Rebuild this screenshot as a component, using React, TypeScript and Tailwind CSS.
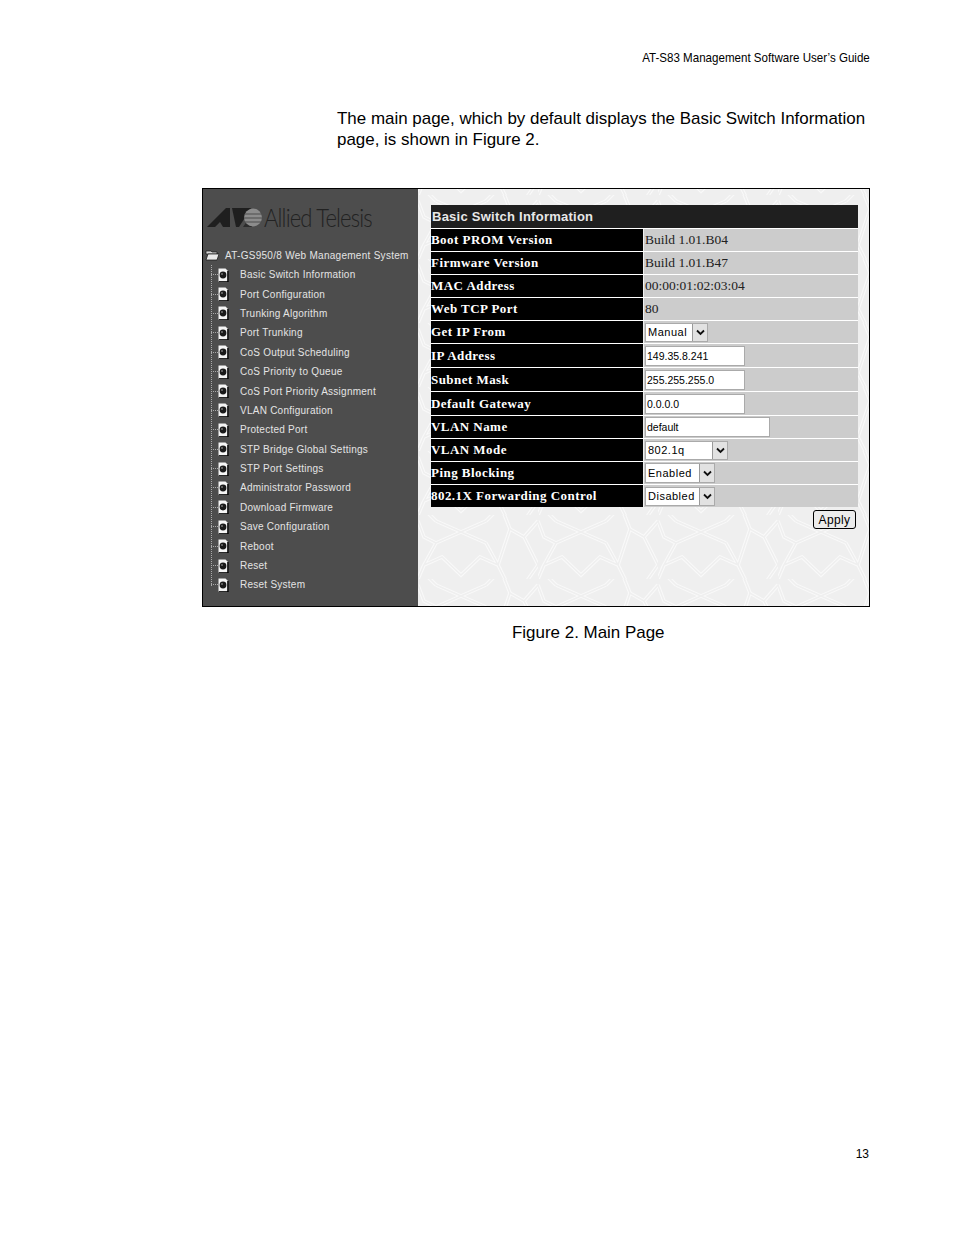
const menu = [
  "Basic Switch Information",
  "Port Configuration",
  "Trunking Algorithm",
  "Port Trunking",
  "CoS Output Scheduling",
  "CoS Priority to Queue",
  "CoS Port Priority Assignment",
  "VLAN Configuration",
  "Protected Port",
  "STP Bridge Global Settings",
  "STP Port Settings",
  "Administrator Password",
  "Download Firmware",
  "Save Configuration",
  "Reboot",
  "Reset",
  "Reset System",
];

// background tile of the content frame, drawn twice to get the double line
const tile =
  "M18 6 L68 28 M68 6 L18 28 M18 28 L6 50 L24 42 L43 60 L62 42 L80 50 L68 28 M18 6 L6 -6 M68 6 L80 -6 M80 50 L92 14 L106 22 L120 6 M92 14 L84 -6 M0 6 L6 22 L18 28 M106 22 L120 50 M120 50 L106 70 M6 50 L0 64 M80 50 L90 70";

function LogoMark() {
  return (
    <svg width="55" height="19" viewBox="0 0 55 19" className="shrink-0">
      <path d="M0 19 L19 0 H23 V19 H16 L13 14 L8 19 Z" fill="#1f1f1f" />
      <path d="M25 0 H44 L32 19 H29 Z" fill="#1f1f1f" />
      <path d="M36 19 L45 6 V19 Z" fill="#2c2c2c" />
      <circle cx="46" cy="9.5" r="9" fill="#8c8c8c" />
      <path d="M38 6 H55 M37 10 H55 M38 14 H55" stroke="#4d4d4d" strokeWidth="1" />
    </svg>
  );
}

function FolderIcon() {
  return (
    <svg width="14" height="12" viewBox="0 0 14 12" className="shrink-0">
      <path d="M1 2 H6 L7 3 H12 V5 H1 Z" fill="#d8d8d8" stroke="#111" strokeWidth="0.7" />
      <path d="M1 11 L3 5 H14 L12 11 Z" fill="#e8e8e8" stroke="#111" strokeWidth="0.7" />
    </svg>
  );
}

function DocIcon() {
  return (
    <svg width="11" height="14" viewBox="0 0 11 14" className="shrink-0">
      <path d="M0.5 0.5 H7.5 L10.5 3.5 V13.5 H0.5 Z" fill="#f4f4f4" />
      <path d="M10 3 V14 H1" fill="none" stroke="#000" strokeWidth="1.6" />
      <circle cx="5" cy="7" r="3.4" fill="#1a1a1a" />
      <circle cx="4" cy="6" r="1" fill="#777" />
    </svg>
  );
}

function Arrow() {
  return (
    <span className="flex h-full w-[15px] shrink-0 items-center justify-center border-l border-[#999] bg-[#e2e2e2]">
      <svg width="9" height="7" viewBox="0 0 9 7">
        <path d="M1 1.5 L4.5 5 L8 1.5" fill="none" stroke="#111" strokeWidth="1.8" />
      </svg>
    </span>
  );
}

function Select({ value, width }: { value: string; width: string }) {
  return (
    <div className={`flex items-center border border-[#aaa] bg-white ${width}`}>
      <span className="flex-1 pl-[2px] text-[11px] tracking-[0.5px] text-black [font-family:'Liberation_Sans',sans-serif]">
        {value}
      </span>
      <Arrow />
    </div>
  );
}

function Field({ value, width }: { value: string; width: string }) {
  return (
    <input
      readOnly
      value={value}
      className={`border border-[#aaa] bg-white pl-[1px] text-[10.5px] text-black outline-none [font-family:'Liberation_Sans',sans-serif] ${width}`}
    />
  );
}

function Row({ label, height, children }: { label: string; height: string; children: React.ReactNode }) {
  return (
    <div className={`flex border-t border-white ${height}`}>
      <div className="flex w-[212px] shrink-0 items-center bg-black text-[13px] font-bold tracking-[0.45px] text-white [font-family:'Liberation_Serif',serif]">
        {label}
      </div>
      <div className="ml-[1px] flex flex-1 items-center bg-[#cccccc] pl-[1px] text-[13.5px] text-[#222] [font-family:'Liberation_Serif',serif]">
        {children}
      </div>
    </div>
  );
}

export default function App() {
  return (
    <div className="flex h-[1235px] w-[954px] flex-col bg-white text-black [font-family:'Liberation_Sans',sans-serif]">
      <div className="pr-[84px] pt-[49px] text-right text-[13px] leading-[17px]">
        <span className="inline-block origin-right scale-x-[0.89] whitespace-nowrap">AT-S83 Management Software User’s Guide</span>
      </div>

      <p className="ml-[337px] mt-[42px] w-[540px] text-[16.95px] leading-[21px]">
        The main page, which by default displays the Basic Switch Information page, is shown in Figure 2.
      </p>

      <div className="ml-[202px] mt-[38px] flex h-[419px] w-[668px] border border-black">
        <aside className="flex w-[215px] shrink-0 flex-col bg-[#4d4d4d] pt-[15px]">
          <div className="flex h-[27px] items-center pl-[4px]">
            <LogoMark />
            <span className="ml-[2px] inline-block origin-left scale-x-[0.85] whitespace-nowrap text-[26px] font-light tracking-[-1px] text-[#222] [font-family:Lato,sans-serif]">Allied Telesis</span>
          </div>
          <div className="mt-[14px] flex h-[20px] items-center pl-[2px] text-[10px] tracking-[0.28px] text-[#e4e4e4]">
            <FolderIcon />
            <span className="ml-[6px] whitespace-nowrap">AT-GS950/8 Web Management System</span>
          </div>
          <ul className="relative">
            <div className="absolute bottom-[9px] left-[8px] top-0 border-l border-dotted border-[#aaa]" />
            {menu.map((item) => (
              <li key={item} className="flex h-[19.4px] items-center pl-[8px] text-[10px] tracking-[0.25px] text-[#e4e4e4]">
                <span className="w-[7px] border-t border-dotted border-[#aaa]" />
                <DocIcon />
                <span className="ml-[11px] whitespace-nowrap">{item}</span>
              </li>
            ))}
          </ul>
        </aside>

        <main className="relative flex-1 overflow-hidden bg-[#efefef] pl-[13px] pr-[11px] pt-[16px]">
          <svg className="absolute inset-0 h-full w-full" aria-hidden="true">
            <defs>
              <pattern id="tile" x="0" y="6" width="120" height="64" patternUnits="userSpaceOnUse">
                <path d={tile} fill="none" stroke="#fafafa" strokeWidth="3.5" />
                <path d={tile} fill="none" stroke="#efefef" strokeWidth="1.5" />
              </pattern>
            </defs>
            <rect width="100%" height="100%" fill="url(#tile)" />
          </svg>

          <div className="relative">
            <div className="flex h-[23px] items-center bg-[#1f1f1f] pl-[1px] text-[13px] font-bold tracking-[0.25px] text-[#e8e8e8]">
              Basic Switch Information
            </div>
            <Row label="Boot PROM Version" height="h-[23px]">Build 1.01.B04</Row>
            <Row label="Firmware Version" height="h-[23px]">Build 1.01.B47</Row>
            <Row label="MAC Address" height="h-[23px]">00:00:01:02:03:04</Row>
            <Row label="Web TCP Port" height="h-[23px]">80</Row>
            <Row label="Get IP From" height="h-[23px]">
              <Select value="Manual" width="h-[19px] w-[63px]" />
            </Row>
            <Row label="IP Address" height="h-[24px]">
              <Field value="149.35.8.241" width="h-[20px] w-[100px]" />
            </Row>
            <Row label="Subnet Mask" height="h-[24px]">
              <Field value="255.255.255.0" width="h-[20px] w-[100px]" />
            </Row>
            <Row label="Default Gateway" height="h-[24px]">
              <Field value="0.0.0.0" width="h-[20px] w-[100px]" />
            </Row>
            <Row label="VLAN Name" height="h-[23px]">
              <Field value="default" width="h-[20px] w-[125px]" />
            </Row>
            <Row label="VLAN Mode" height="h-[23px]">
              <Select value="802.1q" width="h-[19px] w-[83px]" />
            </Row>
            <Row label="Ping Blocking" height="h-[23px]">
              <Select value="Enabled" width="h-[20px] w-[70px]" />
            </Row>
            <Row label="802.1X Forwarding Control" height="h-[23px]">
              <Select value="Disabled" width="h-[19px] w-[70px]" />
            </Row>
            <div className="mt-[3px] flex justify-end pr-[2px]">
              <button className="h-[19px] w-[43px] rounded-[3px] border border-black bg-[#ececec] text-[12px] leading-none tracking-[0.4px] text-black">
                Apply
              </button>
            </div>
          </div>
        </main>
      </div>

      <p className="ml-[512px] mt-[15px] text-[16.95px] leading-[21px]">Figure 2. Main Page</p>

      <div className="mt-auto pb-[74px] pr-[85px] text-right text-[12px] leading-[14px]">13</div>
    </div>
  );
}
